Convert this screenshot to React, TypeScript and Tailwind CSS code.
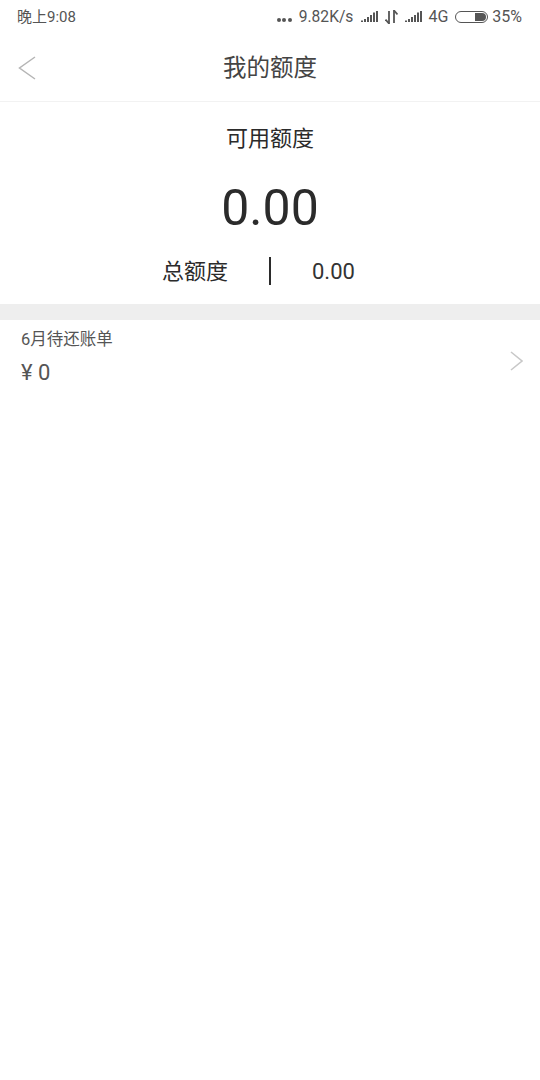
import React from 'react';

const font = "font-['Roboto','Noto_Sans_CJK_SC',sans-serif]";

const Signal = () => (
  <svg width="17" height="11" viewBox="0 0 17 11" fill="#555">
    <rect x="0" y="9.5" width="2" height="1.5" />
    <rect x="3" y="8" width="2" height="3" />
    <rect x="6" y="6" width="2" height="5" />
    <rect x="9" y="4" width="2" height="7" />
    <rect x="12" y="1.5" width="2" height="9.5" />
    <rect x="15" y="0" width="2" height="11" />
  </svg>
);

const StatusBar = () => (
  <div className="h-[34px] flex items-center justify-between pl-[17px] pr-[18px] text-[#555555]">
    <span className="text-[15px]">晚上9:08</span>
    <div className="flex items-center text-[16px]">
      <div className="flex gap-[1.5px] mt-[6px] -ml-[1px]">
        <span className="w-[4px] h-[4px] rounded-full bg-[#555555]" />
        <span className="w-[4px] h-[4px] rounded-full bg-[#555555]" />
        <span className="w-[4px] h-[4px] rounded-full bg-[#555555]" />
      </div>
      <span className="ml-[7px] mt-[1px] text-[15.6px]">9.82K/s</span>
      <div className="ml-[8px]"><Signal /></div>
      <svg className="ml-[7px]" width="13" height="14" viewBox="0 0 13 14" fill="none" stroke="#555" strokeWidth="1.8">
        <path d="M4 14V1" />
        <path d="M.5 9.5 4 13.5" />
        <path d="M9 0v13" />
        <path d="M9 .5l3.5 4" />
      </svg>
      <div className="ml-[7px]"><Signal /></div>
      <span className="ml-[6px]">4G</span>
      <div className="ml-[7px] w-[33px] h-[12px] rounded-full border border-[#555555] flex items-center justify-end pr-[1px]">
        <span className="w-[11px] h-[8px] bg-[#555555] rounded-r-full" />
      </div>
      <span className="ml-[4px]">35%</span>
    </div>
  </div>
);

export default function App() {
  return (
    <div className={`w-[540px] h-[1080px] bg-white flex flex-col ${font}`}>
      <StatusBar />

      <div className="h-[68px] border-b border-[#f2f2f2] flex items-center justify-between pl-[18px] pr-[18px]">
        <svg width="18" height="24" viewBox="0 0 18 24" fill="none" stroke="#b5b5b5" strokeWidth="1.5">
          <path d="M17 1 1.5 12 17 23" />
        </svg>
        <h1 className="mt-[3px] text-[23.5px] font-normal text-[#444444]">我的额度</h1>
        <div className="w-[18px]" />
      </div>

      <div className="flex flex-col items-center">
        <p className="mt-[22px] text-[22px] leading-[30px] text-[#2b2b2b]">可用额度</p>
        <p className="mt-[24px] text-[50px] leading-[60px] text-[#2b2b2b]">0.00</p>
        <div className="mt-[19px] w-full flex items-center h-[28px]">
          <span className="ml-[162px] w-[107px] text-[22px] text-[#2b2b2b]">总额度</span>
          <span className="w-[2px] h-[28px] bg-[#2b2b2b]" />
          <span className="ml-[41px] text-[22px] text-[#333333]">0.00</span>
        </div>
      </div>

      <div className="mt-[19px] h-[16px] bg-[#eeeeee]" />

      <div className="flex items-start justify-between pl-[21px] pr-[17px]">
        <div>
          <p className="mt-[9px] text-[16.5px] leading-[22px] text-[#555555]">6月待还账单</p>
          <p className="mt-[8px] text-[22px] leading-[28px] text-[#555555]">¥ 0</p>
        </div>
        <svg width="13" height="20" viewBox="0 0 13 20" fill="none" stroke="#c8c8c8" strokeWidth="1.6" className="mt-[31px]">
          <path d="M1 1l11 9-11 9" />
        </svg>
      </div>
    </div>
  );
}
